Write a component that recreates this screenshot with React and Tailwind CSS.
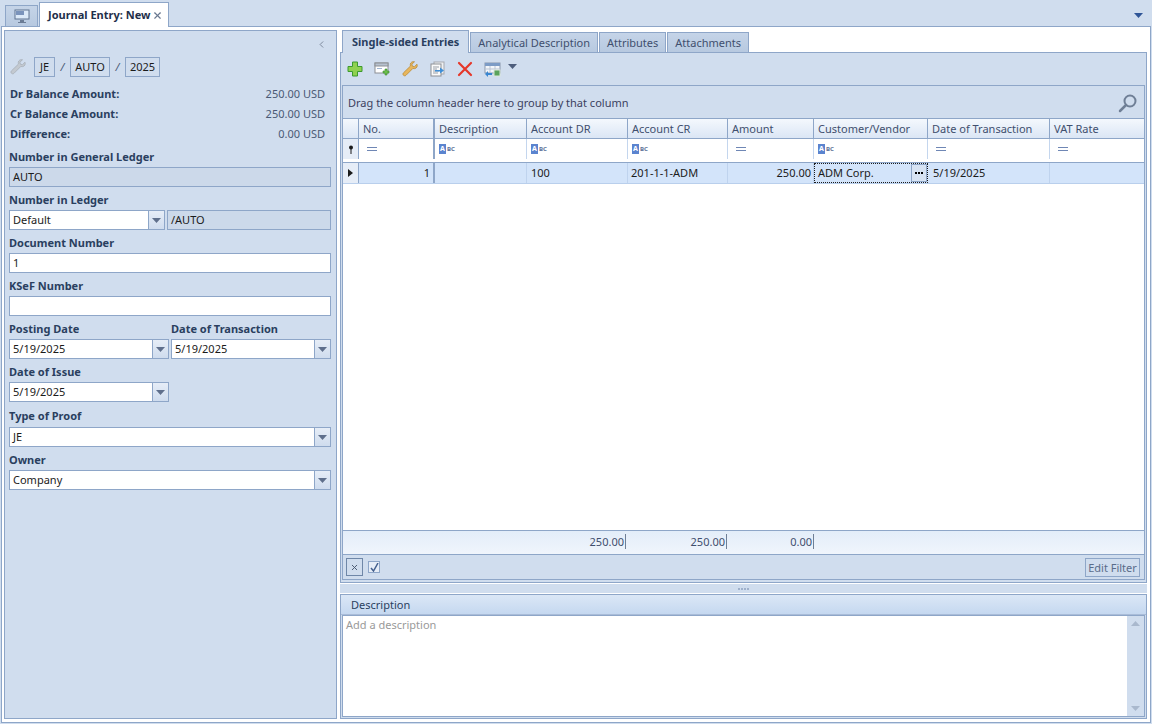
import React from 'react';
import { X, ChevronLeft } from 'lucide-react';

const label = "h-[14px] leading-[14px] font-bold text-[#2a3f5f] whitespace-nowrap";

const Caret = ({ color = '#5f6f8c' }) => (
    <svg width="9" height="5" viewBox="0 0 9 5"><path d="M0 0h9L4.5 5z" fill={color} /></svg>
);

// plain boxed field, white or read-only
const Field = ({ value, readOnly, className = '' }) => (
    <div className={`h-[20px] border border-[#8ea6c8] px-[3px] leading-[18px] text-[#1b1b1b] whitespace-nowrap overflow-hidden ${readOnly ? 'bg-[#ccd9ea]' : 'bg-white'} ${className}`}>
        {value}
    </div>
);

const Combo = ({ value, className = '' }) => (
    <div className={`h-[20px] flex border border-[#8ea6c8] bg-white ${className}`}>
        <div className="flex-1 px-[3px] leading-[18px] text-[#1b1b1b]">{value}</div>
        <div className="w-[16px] flex items-center justify-center border-l border-[#8ea6c8] bg-gradient-to-b from-[#e6edf7] to-[#cfdcee]">
            <Caret />
        </div>
    </div>
);

const Balance = ({ name, amount }) => (
    <div className="h-[20px] flex items-center justify-between pl-[1px] pr-[7px]">
        <span className="font-bold text-[#2a3f5f]">{name}</span>
        <span className="text-[#4a5a75]">{amount}</span>
    </div>
);

const LeftPanel = () => (
    <div className="w-[333px] shrink-0 border border-[#8ea6c8] bg-[#d0ddee] px-[4px] flex flex-col">
        <div className="h-[26px] flex items-center justify-end pr-[5px] pt-[1px]">
            <ChevronLeft size={11} strokeWidth={1.6} color="#5f6b80" />
        </div>
        <div className="h-[20px] flex items-center text-[#1b1b1b]">
            <div className="w-[25px] flex justify-center ml-[-4px] mr-[4px]"><Wrench fill="#c3c9d0" stroke="#a7aeb7" /></div>
            <div className="w-[21px] h-[20px] border border-[#8ea6c8] text-center leading-[18px]">JE</div>
            <div className="w-[15px] text-center text-[#4a5a75] italic">/</div>
            <div className="w-[40px] h-[20px] border border-[#8ea6c8] text-center leading-[18px]">AUTO</div>
            <div className="w-[15px] text-center text-[#4a5a75] italic">/</div>
            <div className="w-[35px] h-[20px] border border-[#8ea6c8] text-center leading-[18px]">2025</div>
        </div>
        <div className="mt-[7px]">
            <Balance name="Dr Balance Amount:" amount="250.00 USD" />
            <Balance name="Cr Balance Amount:" amount="250.00 USD" />
            <Balance name="Difference:" amount="0.00 USD" />
        </div>
        <div className={`${label} mt-[6px]`}>Number in General Ledger</div>
        <Field value="AUTO" readOnly className="mt-[3px] w-[322px]" />
        <div className={`${label} mt-[6px]`}>Number in Ledger</div>
        <div className="mt-[3px] flex gap-[2px] w-[322px]">
            <Combo value="Default" className="w-[156px]" />
            <Field value="/AUTO" readOnly className="flex-1" />
        </div>
        <div className={`${label} mt-[6px]`}>Document Number</div>
        <Field value="1" className="mt-[3px] w-[322px]" />
        <div className={`${label} mt-[6px]`}>KSeF Number</div>
        <Field value="" className="mt-[3px] w-[322px]" />
        <div className="mt-[6px] flex gap-[2px] w-[322px]">
            <div className="w-[160px]">
                <div className={label}>Posting Date</div>
                <Combo value="5/19/2025" className="mt-[3px]" />
            </div>
            <div className="w-[160px]">
                <div className={label}>Date of Transaction</div>
                <Combo value="5/19/2025" className="mt-[3px]" />
            </div>
        </div>
        <div className={`${label} mt-[6px]`}>Date of Issue</div>
        <Combo value="5/19/2025" className="mt-[3px] w-[160px]" />
        <div className={`${label} mt-[7px]`}>Type of Proof</div>
        <Combo value="JE" className="mt-[4px] w-[322px]" />
        <div className={`${label} mt-[6px]`}>Owner</div>
        <Combo value="Company" className="mt-[3px] w-[322px]" />
    </div>
);

const Wrench = ({ fill = '#e8b65c', stroke = '#b98a37' }) => (
    <svg width="16" height="16" viewBox="0 0 16 16">
        <path d="M15 3.2l-2.6 2.5-2-.5-.5-2L12.500.8C10.600.2 8.500 1.300 8.300 3.300c-.1.600 0 1.200.2 1.700L1.500 11.800c-.7.700-.7 1.800 0 2.500s1.800.7 2.500 0l6.900-6.900c.6.200 1.200.3 1.800.2 2-.3 3.100-2.400 2.300-4.400z" fill={fill} stroke={stroke} strokeWidth="0.8" />
    </svg>
);

const ToolIcons = () => (
    <div className="h-[32px] flex items-center pl-[6px] gap-[8px]">
        <svg width="16" height="16" viewBox="0 0 16 16"><path d="M5.500 1h5v4.500H15v5h-4.500V15h-5v-4.500H1v-5h4.500z" fill="#8fd14f" stroke="#3c9a2f" /></svg>
        <svg className="ml-[3px]" width="17" height="16" viewBox="0 0 17 16">
            <rect x="1" y="2" width="13" height="10" fill="#fff" stroke="#8c8f94" />
            <rect x="1" y="2" width="13" height="3" fill="#b6c1cf" stroke="#8c8f94" />
            <rect x="3" y="7" width="5" height="1" fill="#9fb5d3" />
            <path d="M11 8h2v2h2v2h-2v2h-2v-2H9v-2h2z" fill="#6cc04a" stroke="#3c8a2f" strokeWidth="0.6" />
        </svg>
        <div className="ml-[3px] flex"><Wrench /></div>
        <svg className="ml-[3px]" width="17" height="16" viewBox="0 0 17 16">
            <rect x="5" y="1" width="10" height="12" fill="#eef0f3" stroke="#a5a8ad" />
            <rect x="2" y="3" width="10" height="12" fill="#fafafa" stroke="#8c8f94" />
            <path d="M4 6h6M4 8h4M4 10h6M4 12h5" stroke="#9aa0a8" />
            <path d="M6 9h5V6.500l4 3-4 3V10.500H6z" fill="#3e8fd8" />
        </svg>
        <svg className="ml-[3px]" width="16" height="16" viewBox="0 0 16 16"><path d="M2 2l12 12M14 2L2 14" stroke="#e5372a" strokeWidth="2.200" strokeLinecap="round" /></svg>
        <svg className="ml-[3px]" width="17" height="16" viewBox="0 0 17 16">
            <rect x="1" y="2" width="15" height="10" fill="#f3f6fa" stroke="#8a98ac" />
            <rect x="1" y="2" width="15" height="3" fill="#7d9cc6" />
            <path d="M1 8h15M6 5v7M11 5v7" stroke="#b9c4d4" />
            <path d="M1 13l3-3v2h4v2H4v2z" fill="#3a86d0" />
            <rect x="10" y="9" width="6" height="6" fill="#5aa35c" stroke="#d9e8d9" />
        </svg>
        <div className="flex ml-[-1px] mb-[5px]"><Caret color="#4d5d7c" /></div>
    </div>
);

const gridCols = "grid grid-cols-[16px_76px_92px_101px_100px_86px_114px_122px_1fr]";

const Magnifier = () => (
    <svg width="20" height="20" viewBox="0 0 20 20" fill="none">
        <circle cx="12" cy="8" r="5.500" stroke="#6f7f96" strokeWidth="2" />
        <path d="M8 12l-6 6" stroke="#6f7f96" strokeWidth="2.500" strokeLinecap="round" />
    </svg>
);

const headers = ['No.', 'Description', 'Account DR', 'Account CR', 'Amount', 'Customer/Vendor', 'Date of Transaction', 'VAT Rate'];

const TextFilter = () => (
    <div className="flex items-center pl-[4px] gap-[1px]">
        <span className="w-[7px] h-[10px] bg-[#5b84cf] text-white text-[7px] leading-[10px] text-center font-bold">A</span>
        <span className="text-[6px] leading-[10px] font-bold text-[#5b6f96]">BC</span>
    </div>
);

const EqFilter = () => (
    <div className="pl-[8px] flex flex-col gap-[2px]">
        <div className="w-[10px] h-[1px] bg-[#6f87b5]" />
        <div className="w-[10px] h-[1px] bg-[#6f87b5]" />
    </div>
);

const filters = [EqFilter, TextFilter, TextFilter, TextFilter, EqFilter, TextFilter, EqFilter, EqFilter];

const Grid = () => (
    <div className="flex-1 mx-[1px] mb-[2px] border border-[#8ea6c8] flex flex-col min-h-0">
        <div className="h-[33px] shrink-0 flex items-center justify-between pl-[5px] pr-[6px] pt-[2px] bg-[#d0ddee] border-b border-[#8ea6c8] text-[#3b3f5e]">
            <span>Drag the column header here to group by that column</span>
            <Magnifier />
        </div>
        <div className={`${gridCols} h-[20px] shrink-0 bg-gradient-to-b from-[#f4f8fd] to-[#dbe6f5] text-[#3f4f6e] border-b border-[#8ea6c8]`}>
            <div className="border-r border-[#8ea6c8]" />
            {headers.map((h, i) => (
                <div key={h} className={`pl-[4px] leading-[19px] border-r border-[#8ea6c8] last:border-r-0 ${i === 0 ? 'border-r-2' : ''}`}>{h}</div>
            ))}
        </div>
        <div className={`${gridCols} h-[20px] shrink-0 bg-white`}>
            <div className="flex items-center justify-center bg-[#e6edf7] border-r border-[#8ea6c8]">
                <svg width="6" height="9" viewBox="0 0 6 9"><circle cx="3" cy="2.500" r="2" fill="#1b1b1b" /><path d="M2.500 4h1v5h-1z" fill="#1b1b1b" /></svg>
            </div>
            {filters.map((F, i) => (
                <div key={i} className={`flex items-center border-r border-[#c4d6ee] last:border-r-0 ${i === 0 ? 'border-r-2 border-r-[#8ea6c8]' : ''}`}><F /></div>
            ))}
        </div>
        <div className="h-[4px] shrink-0 bg-white border-b border-[#8ea6c8]" />
        <div className={`${gridCols} h-[21px] shrink-0 bg-[#d3e4fa] border-b border-[#b9cfec] text-[#1b1b1b]`}>
            <div className="flex items-center justify-center bg-[#e6edf7] border-r border-[#8ea6c8]">
                <svg width="5" height="8" viewBox="0 0 5 8"><path d="M0 0l5 4-5 4z" fill="#1b1b1b" /></svg>
            </div>
            <div className="text-right pr-[3px] leading-[20px] border-r-2 border-[#8ea6c8]">1</div>
            <div className="border-r border-[#bfd3ee]" />
            <div className="pl-[4px] leading-[20px] border-r border-[#bfd3ee]">100</div>
            <div className="pl-[3px] leading-[20px] border-r border-[#bfd3ee]">201-1-1-ADM</div>
            <div className="text-right pr-[2px] leading-[20px] border-r border-[#bfd3ee]">250.00</div>
            <div className="flex border border-dotted border-[#1b1b1b]">
                <div className="flex-1 pl-[3px] leading-[18px]">ADM Corp.</div>
                <div className="w-[16px] flex items-center justify-center gap-[1px] bg-[#d7e3f3] border border-[#8ea6c8]">
                    <i className="w-[2px] h-[2px] bg-black" /><i className="w-[2px] h-[2px] bg-black" /><i className="w-[2px] h-[2px] bg-black" />
                </div>
            </div>
            <div className="pl-[5px] leading-[20px] border-r border-[#bfd3ee]">5/19/2025</div>
            <div />
        </div>
        <div className="flex-1 bg-white" />
        <div className={`${gridCols} h-[24px] shrink-0 bg-gradient-to-b from-[#e3edf9] to-[#f0f5fc] border-t border-[#8ea6c8] text-[#3f4f6e] leading-[22px]`}>
            <div /><div /><div />
            <div className="text-right pr-[2px]"><span className="border-r border-[#6f7f96] pr-[1px]">250.00</span></div>
            <div className="text-right pr-[1px]"><span className="border-r border-[#6f7f96] pr-[1px]">250.00</span></div>
            <div className="text-right pr-[0px]"><span className="border-r border-[#6f7f96] pr-[1px]">0.00</span></div>
        </div>
        <div className="h-[25px] shrink-0 flex items-center justify-between pl-[3px] pr-[4px] bg-[#d0ddee] border-t border-[#8ea6c8]">
            <div className="flex items-center gap-[5px]">
                <div className="w-[17px] h-[18px] flex items-center justify-center border border-[#6f87a8]">
                    <X size={9} strokeWidth={2.5} color="#46566f" />
                </div>
                <div className="w-[12px] h-[12px] flex items-center justify-center border border-[#8ea6c8] bg-[#e6edf7]">
                    <svg width="9" height="9" viewBox="0 0 9 9" fill="none"><path d="M1 5l2.500 3L8 0" stroke="#44608e" strokeWidth="1.500" /></svg>
                </div>
            </div>
            <div className="w-[55px] h-[19px] text-center leading-[17px] border border-[#8ea6c8] text-[#5a6c8a]">Edit Filter</div>
        </div>
    </div>
);

const Tab = ({ text, active }) => (
    <div className={active
        ? "h-[23px] px-[9px] font-bold text-[#2a3f5f] bg-[#d0ddee] border border-b-0 border-[#8ea6c8] leading-[22px] mb-[-1px] z-10 whitespace-nowrap"
        : "h-[20px] px-[7px] text-[#3f4f6e] bg-gradient-to-b from-[#c5d4e8] to-[#b7c9e0] border border-b-0 border-[#8ea6c8] leading-[20px] whitespace-nowrap"}>
        {text}
    </div>
);

const RightPanel = () => (
    <div className="flex-1 min-w-0 flex flex-col">
        <div className="h-[22px] shrink-0 flex items-end pl-[2px] gap-[1px]">
            <Tab text="Single-sided Entries" active />
            <Tab text="Analytical Description" />
            <Tab text="Attributes" />
            <Tab text="Attachments" />
        </div>
        <div className="h-[531px] shrink-0 border border-[#8ea6c8] bg-[#d0ddee] flex flex-col">
            <ToolIcons />
            <Grid />
        </div>
        <div className="h-[9px] shrink-0 flex justify-center items-center gap-[1px] bg-[#d0ddee] my-[1px]">
            <i className="w-[2px] h-[2px] bg-[#9fb1cc]" /><i className="w-[2px] h-[2px] bg-[#9fb1cc]" /><i className="w-[2px] h-[2px] bg-[#9fb1cc]" /><i className="w-[2px] h-[2px] bg-[#9fb1cc]" />
        </div>
        <div className="flex-1 border border-[#8ea6c8] flex flex-col min-h-0 bg-[#d0ddee]">
            <div className="h-[20px] shrink-0 pl-[10px] leading-[19px] bg-gradient-to-b from-[#dbe7f6] to-[#c5d8f0] border-b border-[#a9bcd8] text-[#2a3f5f]">Description</div>
            <div className="flex-1 flex mx-[1px] mb-[1px] border border-[#8ea6c8] bg-white">
                <div className="flex-1 pl-[3px] pt-[1px] text-[#9a9a9a]">Add a description</div>
                <div className="w-[17px] flex flex-col items-center justify-between py-[5px] bg-[#d0ddee]">
                    <svg width="9" height="5" viewBox="0 0 9 5"><path d="M0 5h9L4.500 0z" fill="#a9b8cd" /></svg>
                    <svg width="9" height="5" viewBox="0 0 9 5"><path d="M0 0h9L4.500 5z" fill="#a9b8cd" /></svg>
                </div>
            </div>
        </div>
    </div>
);

export default function App() {
    return (
        <div className="w-[1152px] h-[724px] overflow-hidden flex flex-col bg-[#d0ddee] font-['Noto_Sans',sans-serif] text-[11px]">
            <div className="h-[26px] shrink-0 flex items-end pl-[5px] gap-[1px] pr-[9px] relative">
                <div className="w-[33px] h-[21px] flex items-center justify-center bg-gradient-to-b from-[#c5d4e8] to-[#b7c9e0] border border-b-0 border-[#8ea6c8]">
                    <svg width="16" height="15" viewBox="0 0 16 15">
                        <rect x="1" y="1" width="14" height="9" fill="#dbe9f8" stroke="#5f7390" />
                        <rect x="2" y="2" width="8" height="4" fill="#7a93bb" />
                        <path d="M6 11h4v2H6zM4 13h8v1H4z" fill="#6b7c95" />
                    </svg>
                </div>
                <div className="h-[25px] w-[130px] flex items-center justify-between pl-[8px] pr-[5px] bg-white border border-b-0 border-[#8ea6c8] mb-[-1px] z-10">
                    <span className="font-bold text-[#1f2f4a] whitespace-nowrap">Journal Entry: New</span>
                    <X size={11} strokeWidth={2.5} color="#69788f" />
                </div>
                <div className="ml-auto mb-[8px] flex"><svg width="9" height="5" viewBox="0 0 9 5"><path d="M0 0h9L4.500 5z" fill="#2f5597" /></svg></div>
            </div>
            <div className="flex-1 mx-[1px] mb-[1px] min-h-0 border border-[#8ea6c8] bg-white pt-[3px] pl-[2px] pr-[3px] pb-[3px] flex gap-[3px]">
                <LeftPanel />
                <RightPanel />
            </div>
        </div>
    );
}
